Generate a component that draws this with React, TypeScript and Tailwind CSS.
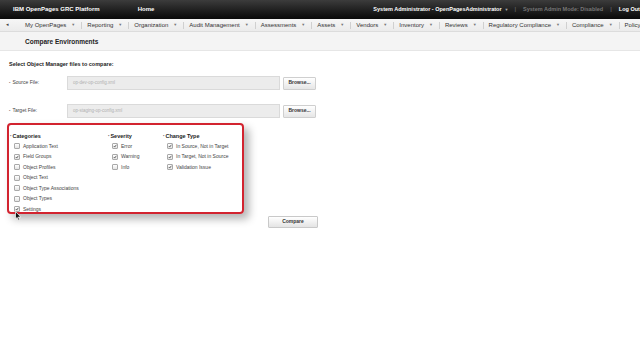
import React from "react";

const navItems = [
  "My OpenPages",
  "Reporting",
  "Organization",
  "Audit Management",
  "Assessments",
  "Assets",
  "Vendors",
  "Inventory",
  "Reviews",
  "Regulatory Compliance",
  "Compliance",
  "Policy",
];

const categories = [
  { label: "Application Text", checked: false },
  { label: "Field Groups", checked: true },
  { label: "Object Profiles", checked: false },
  { label: "Object Text", checked: false },
  { label: "Object Type Associations", checked: false },
  { label: "Object Types", checked: false },
  { label: "Settings", checked: true },
];

const severity = [
  { label: "Error", checked: true },
  { label: "Warning", checked: true },
  { label: "Info", checked: false },
];

const changeType = [
  { label: "In Source, Not in Target", checked: true },
  { label: "In Target, Not in Source", checked: true },
  { label: "Validation Issue", checked: true },
];

const Check = ({ checked }: { checked: boolean }) => (
  <div className="w-[6px] h-[6px] border border-[#a9a9a9] bg-gradient-to-b from-white to-[#e4e4e4] rounded-[1px] flex items-center justify-center shrink-0">
    {checked && (
      <svg width="6" height="6" viewBox="0 0 10 10">
        <path d="M2 5.2 L4.2 7.6 L8.6 1.8" fill="none" stroke="#333" strokeWidth="1.8" />
      </svg>
    )}
  </div>
);

const Group = ({ title, items, width }: { title: string; items: any[]; width: string }) => (
  <div className={`relative z-10 flex flex-col ${width}`}>
    <div className="h-[8px] flex items-center text-[5.5px] font-bold text-[#222]">
      <span className="text-[4px] text-[#666] mr-[1px]">•</span>
      {title}
    </div>
    <div className="pl-[4px] pt-[1px] flex flex-col">
      {items.map((el: any) => (
        <div key={el.label} className="h-[10.5px] flex items-center gap-[3px] text-[5px] text-[#444] whitespace-nowrap">
          <Check checked={el.checked} />
          <span>{el.label}</span>
        </div>
      ))}
    </div>
  </div>
);

const App = () => {
  return (
    <div className="w-[640px] h-[360px] bg-white overflow-hidden relative font-['Liberation_Sans',Arial,sans-serif]">
      {/* top bar */}
      <div className="h-[19px] bg-gradient-to-b from-[#3c3c3c] to-[#0a0a0a] flex items-center text-[6px] font-bold text-white whitespace-nowrap">
        <span className="ml-[13px]">IBM OpenPages GRC Platform</span>
        <span className="ml-[38px]">Home</span>
        <span className="ml-[219px] text-[5.5px]">System Administrator - OpenPagesAdministrator</span>
        <span className="ml-[3px] text-[4px] text-[#aaa]">▼</span>
        <span className="ml-[6px] text-[#777] font-normal">|</span>
        <span className="ml-[7px] text-[5.5px] text-[#777]">System Admin Mode: Disabled</span>
        <span className="ml-[7px] text-[#777] font-normal">|</span>
        <span className="ml-[7px] text-[5.5px]">Log Out</span>
      </div>

      {/* nav */}
      <div className="h-[13px] bg-gradient-to-b from-[#f6f6f6] to-[#ebebeb] border-b border-[#dcdcdc] flex items-center text-[6px] text-[#333] whitespace-nowrap">
        <span className="ml-[6px] text-[5px] text-[#444]">◂</span>
        <span className="ml-[16px]" />
        {navItems.map((item, i) => (
          <div key={item} className="flex items-center">
            <span>{item}</span>
            {i < navItems.length - 1 && (
              <>
                <span className="ml-[5px] text-[4px] text-[#777]">▼</span>
                <span className="ml-[6px] mr-[5px] w-px h-[7px] bg-[#d0d0d0]" />
              </>
            )}
          </div>
        ))}
      </div>

      {/* page title band */}
      <div className="h-[19px] bg-[#f4f4f4] border-b border-[#e6e6e6] flex items-center pl-[25px] pt-[2px] text-[6.5px] font-bold text-[#222]">
        Compare Environments
      </div>

      {/* content */}
      <div className="pl-[9px] pt-[9px]">
        <div className="text-[5.5px] font-bold text-[#222] h-[8px] flex items-center">
          Select Object Manager files to compare:
        </div>

        <div className="mt-[8px] flex items-center h-[14px]">
          <div className="w-[58px] text-[5px] text-[#444]">
            <span className="text-[4px] text-[#777] mr-[2px]">•</span>Source File:
          </div>
          <div className="w-[213px] h-[14px] bg-[#ececec] border border-[#dadada] flex items-center pl-[5px] text-[4.5px] text-[#b0b0b0]">
            op-dev-op-config.xml
          </div>
          <div className="ml-[3px] w-[33px] h-[13px] bg-gradient-to-b from-white to-[#e6e6e6] border border-[#cfcfcf] rounded-[1px] flex items-center justify-center text-[5px] font-bold text-[#333]">
            Browse...
          </div>
        </div>

        <div className="mt-[14px] flex items-center h-[14px]">
          <div className="w-[58px] text-[5px] text-[#444]">
            <span className="text-[4px] text-[#777] mr-[2px]">•</span>Target File:
          </div>
          <div className="w-[213px] h-[14px] bg-[#ececec] border border-[#dadada] flex items-center pl-[5px] text-[4.5px] text-[#b0b0b0]">
            op-staging-op-config.xml
          </div>
          <div className="ml-[3px] w-[33px] h-[13px] bg-gradient-to-b from-white to-[#e6e6e6] border border-[#cfcfcf] rounded-[1px] flex items-center justify-center text-[5px] font-bold text-[#333]">
            Browse...
          </div>
        </div>

        <div className="mt-[5px] ml-[-2px] w-[237px] h-[91px] border-2 border-[#d2232f] rounded-[4px] shadow-[5px_5px_8px_rgba(0,0,0,0.3)] flex pt-[7px] pl-[1px]">
          <Group title="Categories" items={categories} width="w-[98px]" />
          <Group title="Severity" items={severity} width="w-[55px]" />
          <Group title="Change Type" items={changeType} width="w-[78px]" />
        </div>

        <div className="mt-[2px] ml-[259px] w-[50px] h-[12px] bg-gradient-to-b from-white to-[#e4e4e4] border border-[#c9c9c9] rounded-[1px] flex items-center justify-center text-[5px] font-bold text-[#333]">
          Compare
        </div>
      </div>

      {/* mouse cursor */}
      <svg className="absolute z-20 left-[15px] top-[211px]" width="7" height="10" viewBox="0 0 7 10">
        <path d="M0.5 0.5 L0.5 8 L2.2 6.4 L3.4 9.2 L4.6 8.7 L3.4 6 L5.8 6 Z" fill="#111" stroke="#fff" strokeWidth="0.7" />
      </svg>
    </div>
  );
};

export default App;
